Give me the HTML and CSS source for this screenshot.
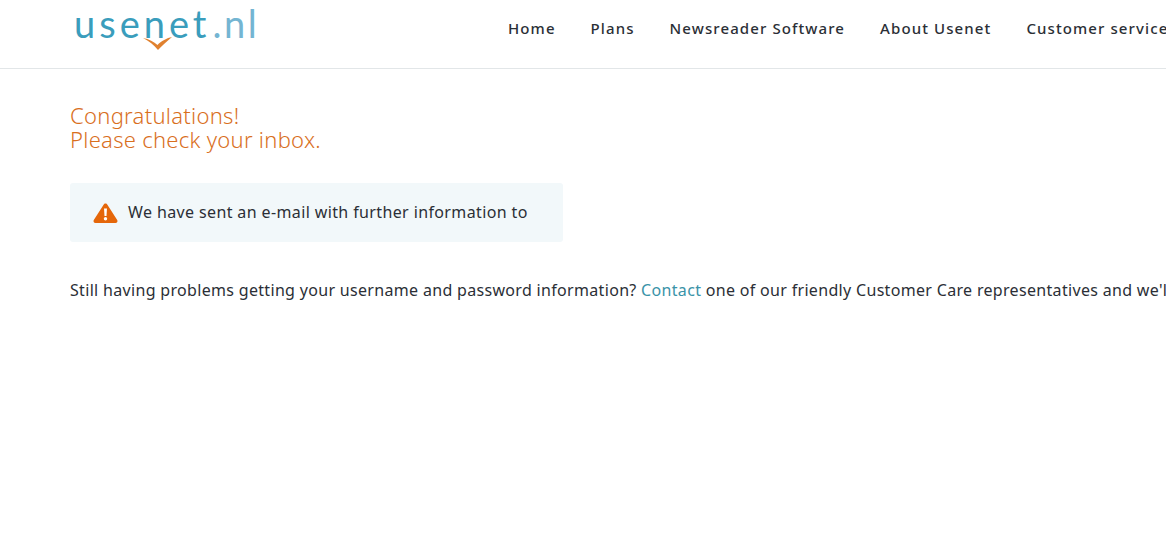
FILE: index.html
```
<!DOCTYPE html>
<html lang="en">
<head>
<meta charset="utf-8">
<title>Usenet.nl</title>
<link rel="stylesheet" href="styles.css">
</head>
<body>
<header class="site-header">
  <a class="logo" href="#">
    <span class="logo-main">usenet</span><span class="logo-tld">.nl</span>
    <svg class="logo-tick" width="30" height="14" viewBox="0 0 30 14"><path d="M0 1 C6 2 11 5 14.500 8 C18 4 24 1 29 0 C24 4 19 9 15 13 C11 8 6 4 0 1Z" fill="#e0812f"/></svg>
  </a>
  <nav class="nav">
    <a href="#">Home</a>
    <a href="#">Plans</a>
    <a href="#">Newsreader Software</a>
    <a href="#">About Usenet</a>
    <a href="#">Customer service</a>
  </nav>
</header>
<main class="content">
  <h1 class="title">Congratulations!<br>Please check your inbox.</h1>
  <div class="notice">
    <svg class="notice-icon" width="25" height="20" viewBox="0 0 25 20"><path d="M12.500 0.500 C13.300 0.500 14 1 14.400 1.700 L24.200 16.900 C25 18.300 24.200 20 22.500 20 L2.500 20 C0.800 20 0 18.300 0.800 16.900 L10.600 1.700 C11 1 11.700 0.500 12.500 0.500Z" fill="#e5670a"/><path d="M11 5.500 H14 L13.500 13 H11.500Z" fill="#fff"/><circle cx="12.500" cy="15.700" r="1.700" fill="#fff"/></svg>
    <span class="notice-text">We have sent an e-mail with further information to</span>
  </div>
  <p class="help">Still having problems getting your username and password information? <a href="#">Contact</a> one of our friendly Customer Care representatives and we'll be happy to help you.</p>
</main>
</body>
</html>
```
FILE: styles.css
```
html, body {
  margin: 0;
  padding: 0;
  height: 100%;
  overflow: hidden;
  background: #fff;
}
body {
  font-family: "Noto Sans", "Open Sans", sans-serif;
  color: #2b2f36;
  font-size: 16px;
  letter-spacing: 0.320px;
}
a { text-decoration: none; }
.site-header {
  display: flex;
  align-items: center;
  height: 68px;
  border-bottom: 1px solid #e2e6e8;
  padding-left: 74px;
  white-space: nowrap;
}
.logo {
  position: relative;
  display: block;
  flex: none;
  width: 184px;
  height: 54px;
  margin-top: -14px;
  font-family: "Lato", sans-serif;
  font-weight: 400;
  font-size: 38px;
  line-height: 46px;
  letter-spacing: 4px;
}
.logo-main { color: #3a9dbc; }
.logo-tld { color: #74b5d2; letter-spacing: 2.500px; margin-left: 2px; }
.logo-tick { position: absolute; left: 69px; top: 37px; }
.nav {
  display: flex;
  flex: none;
  gap: 35px;
  margin-left: 250px;
  margin-top: -12px;
}
.nav a {
  color: #2b2f36;
  font-size: 15px;
  font-weight: 500;
  letter-spacing: 1.100px;
}
.content { padding: 0 0 0 70px; white-space: nowrap; }
.title {
  margin: 34px 0 32px;
  font-size: 22px;
  font-weight: 300;
  line-height: 24px;
  letter-spacing: 0.280px;
  color: #d96f1e;
}
.notice {
  display: flex;
  align-items: center;
  gap: 10px;
  box-sizing: border-box;
  width: 493px;
  height: 59px;
  padding-left: 23px;
  background: #f2f8fa;
  border-radius: 3px;
}
.notice-text { margin-top: -2px; letter-spacing: 0.380px; }
.help { margin: 38px 0 0; line-height: 20px; }
.help a { color: #3a93a8; }
```
